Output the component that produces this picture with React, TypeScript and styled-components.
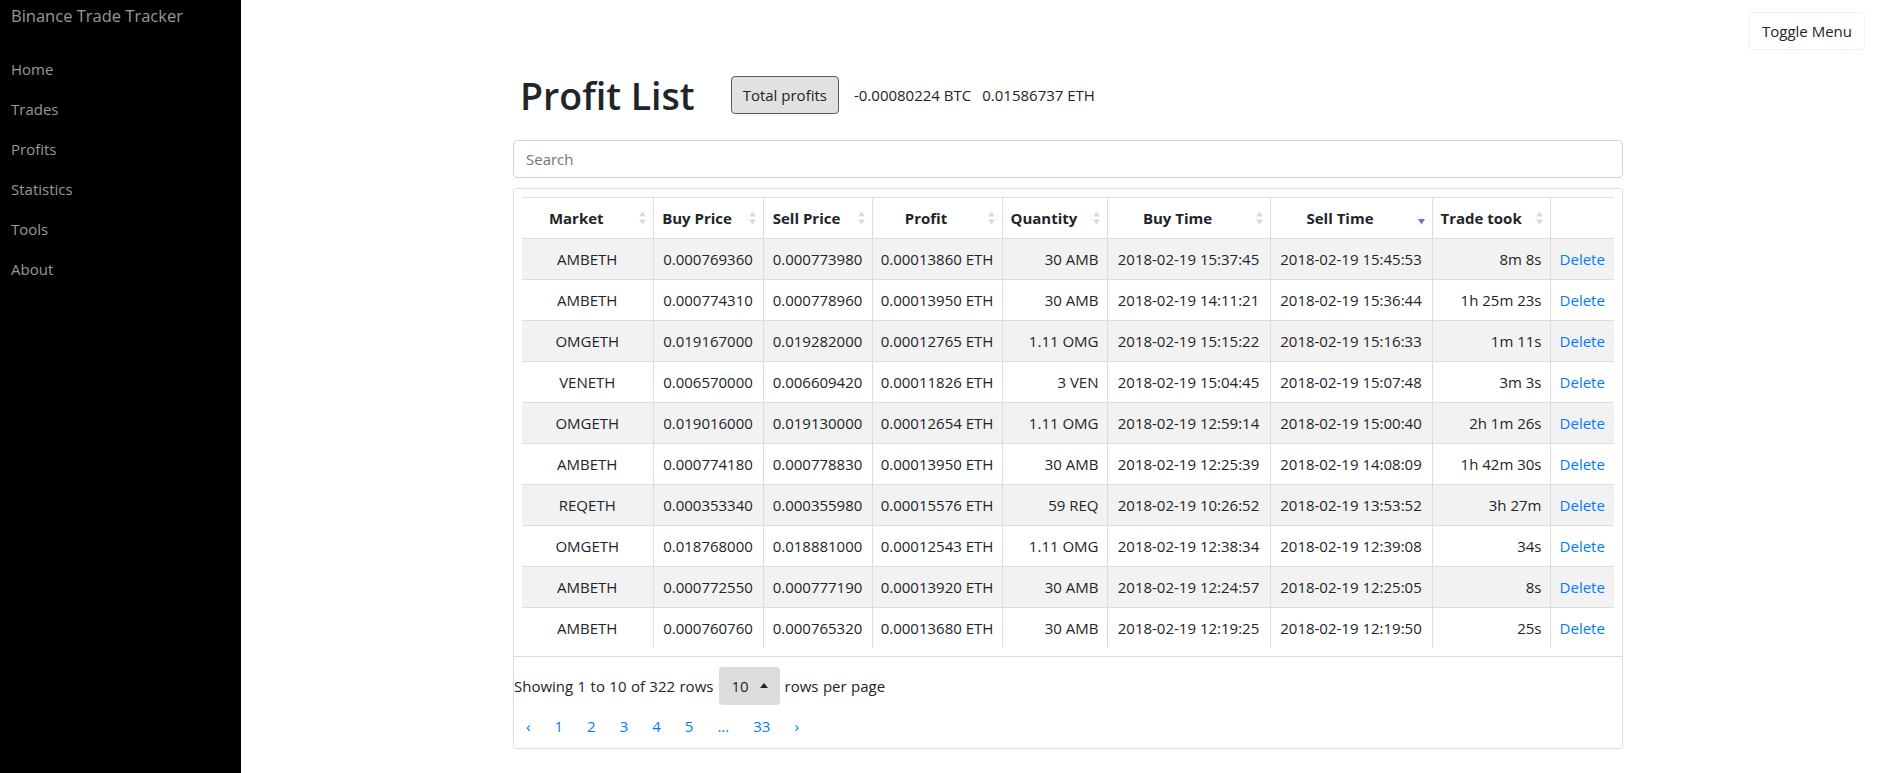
import React from "react";
import styled, { createGlobalStyle } from "styled-components";

const GlobalStyle = createGlobalStyle`
  html, body { margin: 0; padding: 0; }
  body {
    font-family: "Open Sans", "Liberation Sans", sans-serif;
    font-size: 15px;
    line-height: 24px;
    color: #212529;
    background: #fff;
  }
  * { box-sizing: border-box; }
`;

const Layout = styled.div`
  display: flex;
  min-height: 773px;
`;

const Sidebar = styled.nav`
  flex: 0 0 241px;
  width: 241px;
  min-height: 773px;
  background: #000;
  padding-left: 11px;
`;

const Brand = styled.div`
  height: 32px;
  line-height: 32px;
  font-size: 16.5px;
  color: #999;
  margin-bottom: 17px;
  white-space: nowrap;
`;

const NavList = styled.ul`
  list-style: none;
  margin: 0;
  padding: 0;
`;

const NavItem = styled.li`
  height: 40px;
  line-height: 40px;
  color: #999;
  font-size: 15px;
`;

const Main = styled.main`
  flex: 1;
  display: flex;
  flex-direction: column;
  padding-left: 15px;
  padding-top: 12px;
`;

const TopBar = styled.div`
  display: flex;
  justify-content: flex-end;
  padding-right: 15px;
`;

const ToggleButton = styled.button`
  font: inherit;
  height: 38px;
  padding: 6px 12px;
  line-height: 24px;
  background: #fff;
  color: #212529;
  border: 1px solid #f1f1f1;
  border-radius: 4px;
`;

const Content = styled.div`
  width: 1110px;
  margin: 0 auto;
`;

const TitleRow = styled.div`
  display: flex;
  align-items: center;
  height: 50px;
  margin-top: 20px;
`;

const Title = styled.h1`
  margin: 0 0 0 7px;
  font-size: 37.5px;
  line-height: 1.2;
  font-weight: 600;
  color: #212529;
`;

const TotalButton = styled.button`
  font: inherit;
  margin-left: 36px;
  height: 38px;
  padding: 6px 11px;
  line-height: 24px;
  background: #e1e1e1;
  color: #212529;
  border: 1px solid #5c5c5c;
  border-radius: 4px;
`;

const Totals = styled.div`
  margin-left: 15px;
  display: flex;
  gap: 11px;
`;

const SearchInput = styled.input`
  display: block;
  width: 100%;
  height: 38px;
  margin-top: 20px;
  padding: 6px 12px;
  font: inherit;
  line-height: 24px;
  color: #495057;
  border: 1px solid #ced4da;
  border-radius: 4px;
  outline: none;
  &::placeholder { color: #6c757d; }
`;

const Card = styled.div`
  margin-top: 10px;
  border: 1px solid #ddd;
  border-radius: 4px;
`;

const TableWrap = styled.div`
  padding: 8px;
`;

const Table = styled.table`
  width: 100%;
  border-collapse: collapse;
  table-layout: fixed;
`;

const Col = styled.col<{ $w: number }>`
  width: ${(p) => p.$w}px;
`;

const Th = styled.th`
  position: relative;
  padding: 0;
  border-top: 1px solid #ddd;
  border-left: 1px solid #ddd;
  font-weight: 700;
  text-align: center;
  vertical-align: middle;
  &:first-child { border-left: none; }
`;

const ThInner = styled.div<{ $sortable?: boolean }>`
  padding: 8px ${(p) => (p.$sortable ? "30px" : "8px")} 8px 8px;
  line-height: 24px;
  white-space: nowrap;
  overflow: hidden;
  min-height: 40px;
`;

const SortIcon = styled.svg`
  position: absolute;
  right: 7px;
  top: 50%;
  transform: translateY(-50%);
`;

const Tr = styled.tr`
  &:nth-child(odd) { background: #f2f2f2; }
`;

const Td = styled.td<{ $align?: string }>`
  padding: 8px;
  line-height: 24px;
  border-top: 1px solid #ddd;
  border-left: 1px solid #ddd;
  text-align: ${(p) => p.$align || "center"};
  white-space: nowrap;
  overflow: hidden;
  &:first-child { border-left: none; }
`;

const Link = styled.a`
  color: #007bff;
  text-decoration: none;
  cursor: pointer;
`;

const Pagination = styled.div`
  border-top: 1px solid #ddd;
`;

const Detail = styled.div`
  display: flex;
  align-items: center;
  margin-top: 10px;
  height: 38px;
  white-space: nowrap;
  word-spacing: 0.5px;
`;

const PageSize = styled.button`
  font: inherit;
  display: inline-flex;
  align-items: center;
  gap: 11px;
  height: 38px;
  margin: 0 5px 0 6px;
  padding: 6px 12px;
  line-height: 24px;
  background: #dcdcdc;
  color: #212529;
  border: none;
  border-radius: 4px;
`;

const Caret = styled.span`
  display: inline-block;
  width: 0;
  height: 0;
  border-left: 4px solid transparent;
  border-right: 4px solid transparent;
  border-bottom: 5px solid #212529;
  margin-top: -2px;
`;

const Pages = styled.ul`
  display: flex;
  list-style: none;
  margin: 9px 0 10px;
  padding: 0;
`;

const PageItem = styled.li`
  line-height: 24px;
`;

const PageLink = styled(Link)`
  display: block;
  padding: 0 12px;
`;

type Row = [string, string, string, string, string, string, string, string];

const rows: Row[] = [
  ["AMBETH", "0.000769360", "0.000773980", "0.00013860 ETH", "30 AMB", "2018-02-19 15:37:45", "2018-02-19 15:45:53", "8m 8s"],
  ["AMBETH", "0.000774310", "0.000778960", "0.00013950 ETH", "30 AMB", "2018-02-19 14:11:21", "2018-02-19 15:36:44", "1h 25m 23s"],
  ["OMGETH", "0.019167000", "0.019282000", "0.00012765 ETH", "1.11 OMG", "2018-02-19 15:15:22", "2018-02-19 15:16:33", "1m 11s"],
  ["VENETH", "0.006570000", "0.006609420", "0.00011826 ETH", "3 VEN", "2018-02-19 15:04:45", "2018-02-19 15:07:48", "3m 3s"],
  ["OMGETH", "0.019016000", "0.019130000", "0.00012654 ETH", "1.11 OMG", "2018-02-19 12:59:14", "2018-02-19 15:00:40", "2h 1m 26s"],
  ["AMBETH", "0.000774180", "0.000778830", "0.00013950 ETH", "30 AMB", "2018-02-19 12:25:39", "2018-02-19 14:08:09", "1h 42m 30s"],
  ["REQETH", "0.000353340", "0.000355980", "0.00015576 ETH", "59 REQ", "2018-02-19 10:26:52", "2018-02-19 13:53:52", "3h 27m"],
  ["OMGETH", "0.018768000", "0.018881000", "0.00012543 ETH", "1.11 OMG", "2018-02-19 12:38:34", "2018-02-19 12:39:08", "34s"],
  ["AMBETH", "0.000772550", "0.000777190", "0.00013920 ETH", "30 AMB", "2018-02-19 12:24:57", "2018-02-19 12:25:05", "8s"],
  ["AMBETH", "0.000760760", "0.000765320", "0.00013680 ETH", "30 AMB", "2018-02-19 12:19:25", "2018-02-19 12:19:50", "25s"],
];

type Column = { title: string; width: number; align: string; sort?: "both" | "desc" };

const columns: Column[] = [
  { title: "Market", width: 131, align: "center", sort: "both" },
  { title: "Buy Price", width: 110, align: "center", sort: "both" },
  { title: "Sell Price", width: 109, align: "center", sort: "both" },
  { title: "Profit", width: 130, align: "center", sort: "both" },
  { title: "Quantity", width: 105, align: "right", sort: "both" },
  { title: "Buy Time", width: 163, align: "center", sort: "both" },
  { title: "Sell Time", width: 162, align: "center", sort: "desc" },
  { title: "Trade took", width: 118, align: "right", sort: "both" },
  { title: "", width: 64, align: "center" },
];

const SortBoth = () => (
  <SortIcon width="7" height="14" viewBox="0 0 7 14">
    <path d="M3.5 0.5 L7 5.5 L0 5.5 Z" fill="#d9d9d9" />
    <path d="M0 8.5 L7 8.5 L3.5 13.5 Z" fill="#d9d9d9" />
  </SortIcon>
);

const SortDesc = () => (
  <SortIcon width="7" height="14" viewBox="0 0 7 14">
    <path d="M0 8 L7 8 L3.5 13.5 Z" fill="#6f74c8" />
  </SortIcon>
);

const navItems = ["Home", "Trades", "Profits", "Statistics", "Tools", "About"];
const pages = ["‹", "1", "2", "3", "4", "5", "...", "33", "›"];

export default function App() {
  return (
    <>
      <GlobalStyle />
      <Layout>
        <Sidebar>
          <Brand>Binance Trade Tracker</Brand>
          <NavList>
            {navItems.map((n) => (
              <NavItem key={n}>{n}</NavItem>
            ))}
          </NavList>
        </Sidebar>
        <Main>
          <TopBar>
            <ToggleButton>Toggle Menu</ToggleButton>
          </TopBar>
          <Content>
            <TitleRow>
              <Title>Profit List</Title>
              <TotalButton>Total profits</TotalButton>
              <Totals>
                <span>-0.00080224 BTC</span>
                <span>0.01586737 ETH</span>
              </Totals>
            </TitleRow>
            <SearchInput placeholder="Search" />
            <Card>
              <TableWrap>
                <Table>
                  <colgroup>
                    {columns.map((c, i) => (
                      <Col key={i} $w={c.width} />
                    ))}
                  </colgroup>
                  <thead>
                    <tr>
                      {columns.map((c, i) => (
                        <Th key={i}>
                          <ThInner $sortable={!!c.sort}>{c.title}</ThInner>
                          {c.sort === "both" && <SortBoth />}
                          {c.sort === "desc" && <SortDesc />}
                        </Th>
                      ))}
                    </tr>
                  </thead>
                  <tbody>
                    {rows.map((r, ri) => (
                      <Tr key={ri}>
                        {r.map((v, ci) => (
                          <Td key={ci} $align={columns[ci].align}>
                            {v}
                          </Td>
                        ))}
                        <Td>
                          <Link>Delete</Link>
                        </Td>
                      </Tr>
                    ))}
                  </tbody>
                </Table>
              </TableWrap>
              <Pagination>
                <Detail>
                  <span>Showing 1 to 10 of 322 rows</span>
                  <PageSize>
                    10 <Caret />
                  </PageSize>
                  <span>rows per page</span>
                </Detail>
                <Pages>
                  {pages.map((p, i) => (
                    <PageItem key={i}>
                      <PageLink>{p}</PageLink>
                    </PageItem>
                  ))}
                </Pages>
              </Pagination>
            </Card>
          </Content>
        </Main>
      </Layout>
    </>
  );
}
